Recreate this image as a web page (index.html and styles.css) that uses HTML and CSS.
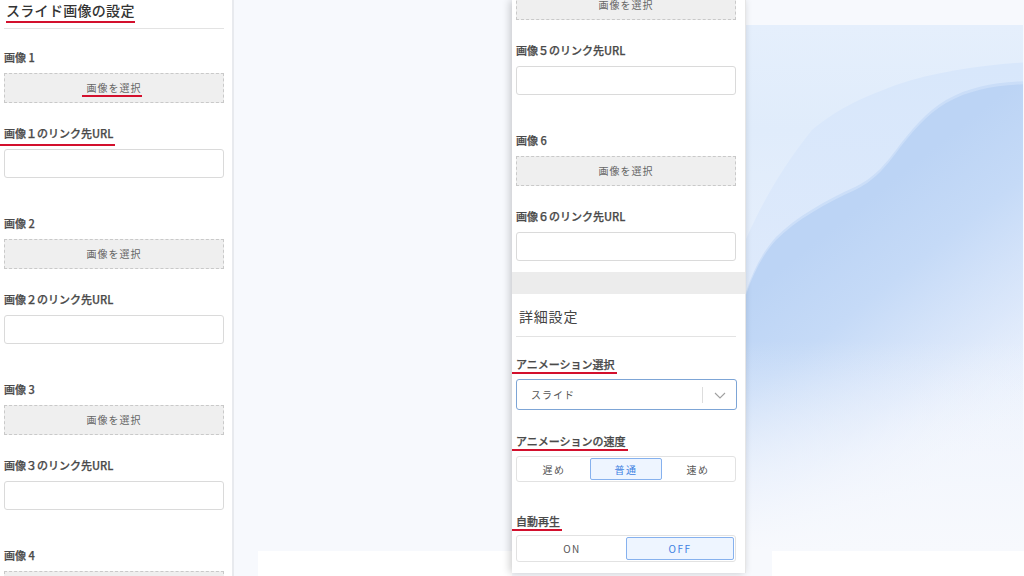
FILE: index.html
```html
<!DOCTYPE html>
<html lang="ja">
<head>
<meta charset="utf-8">
<title>スライド画像の設定</title>
<link rel="stylesheet" href="styles.css">
</head>
<body>
<div class="screen">
  <aside class="panel-left">
    <h2 class="panel-title"><span class="mark">スライド画像の設定</span></h2>
    <div class="field-group first">
      <div class="label">画像 1</div>
      <div class="picker"><span class="mark mark-pick">画像を選択</span></div>
      <div class="label url"><span class="mark mark-lead">画像１のリンク先URL</span></div>
      <div class="text-input"></div>
    </div>
    <div class="field-group">
      <div class="label">画像 2</div>
      <div class="picker">画像を選択</div>
      <div class="label url">画像２のリンク先URL</div>
      <div class="text-input"></div>
    </div>
    <div class="field-group">
      <div class="label">画像 3</div>
      <div class="picker">画像を選択</div>
      <div class="label url">画像３のリンク先URL</div>
      <div class="text-input"></div>
    </div>
    <div class="field-group">
      <div class="label">画像 4</div>
      <div class="picker">画像を選択</div>
    </div>
  </aside>

  <div class="backdrop">
    <div class="bottom-card"></div>
  </div>

  <section class="panel-center">
    <div class="field-group top-cut">
      <div class="picker">画像を選択</div>
      <div class="label url">画像５のリンク先URL</div>
      <div class="text-input"></div>
    </div>
    <div class="field-group">
      <div class="label">画像 6</div>
      <div class="picker">画像を選択</div>
      <div class="label url">画像６のリンク先URL</div>
      <div class="text-input"></div>
    </div>
    <div class="band"></div>
    <h3 class="section-title">詳細設定</h3>
    <div class="label anim"><span class="mark mark-lead">アニメーション選択</span></div>
    <div class="select">
      <span class="select-value">スライド</span>
      <span class="select-divider"></span>
      <svg class="chevron" width="12" height="7" viewBox="0 0 12 7"><path d="M1 1 L6 6 L11 1" fill="none" stroke="#a0a0a0" stroke-width="1.1"/></svg>
    </div>
    <div class="label speed"><span class="mark mark-lead">アニメーションの速度</span></div>
    <div class="segmented three">
      <span class="seg">遅め</span>
      <span class="seg active">普通</span>
      <span class="seg">速め</span>
    </div>
    <div class="label auto"><span class="mark mark-lead">自動再生</span></div>
    <div class="segmented two">
      <span class="seg">ON</span>
      <span class="seg active">OFF</span>
    </div>
  </section>

  <div class="preview">
    <svg class="hero" width="277" height="526" viewBox="0 0 277 526">
      <defs>
        <linearGradient id="base" x1="0" y1="0" x2="0" y2="1">
          <stop offset="0" stop-color="#e5effc"/>
          <stop offset="0.2" stop-color="#e0ecfb"/>
          <stop offset="0.55" stop-color="#e8f0fc"/>
          <stop offset="0.75" stop-color="#eff4fd"/>
          <stop offset="0.9" stop-color="#f4f7fd"/>
          <stop offset="1" stop-color="#f7f9fd"/>
        </linearGradient>
        <linearGradient id="outer" gradientUnits="userSpaceOnUse" x1="0" y1="40" x2="0" y2="430">
          <stop offset="0" stop-color="#d8e7fb"/>
          <stop offset="0.5" stop-color="#dbe8fb" stop-opacity="0.8"/>
          <stop offset="1" stop-color="#e8f0fc" stop-opacity="0"/>
        </linearGradient>
        <linearGradient id="inner" gradientUnits="userSpaceOnUse" x1="140" y1="160" x2="336" y2="407">
          <stop offset="0" stop-color="#bcd4f5"/>
          <stop offset="0.25" stop-color="#c5daf7"/>
          <stop offset="0.55" stop-color="#d9e6fa" stop-opacity="0.8"/>
          <stop offset="0.85" stop-color="#eef3fd" stop-opacity="0"/>
        </linearGradient>
        <linearGradient id="edge" gradientUnits="userSpaceOnUse" x1="140" y1="160" x2="240" y2="286">
          <stop offset="0" stop-color="#bcd4f5" stop-opacity="0.5"/>
          <stop offset="1" stop-color="#bcd4f5" stop-opacity="0"/>
        </linearGradient>
        <linearGradient id="fade" x1="0" y1="0" x2="0" y2="1">
          <stop offset="0.6" stop-color="#f4f7fd" stop-opacity="0"/>
          <stop offset="0.85" stop-color="#f4f7fd" stop-opacity="0.7"/>
          <stop offset="1" stop-color="#f7f9fd"/>
        </linearGradient>
      </defs>
      <rect width="277" height="526" fill="url(#base)"/>
      <path d="M-6,228 C10,190 30,150 66,105 C90,85 110,75 150,60 C190,46 240,40 283,37 L283,526 L-6,526 Z" fill="url(#outer)"/>
      <path d="M-6,287 C2,257 12,232 30,212 C50,192 80,175 109,162 C125,154 135,145 150,125 C165,105 180,87 200,75 C225,61 250,57 283,56 L283,526 L-6,526 Z" fill="url(#edge)"/>
      <path d="M-6,290 C2,260 12,235 30,215 C50,195 80,178 109,165 C125,157 135,148 150,128 C165,108 180,90 200,78 C225,64 250,60 283,59 L283,526 L-6,526 Z" fill="url(#inner)"/>
      <rect width="277" height="526" fill="url(#fade)"/>
    </svg>
    <div class="bottom-card right"></div>
  </div>
</div>
</body>
</html>
```

FILE: styles.css
```css
* { box-sizing: border-box; }
html, body { margin: 0; padding: 0; }
body {
  font-family: "Noto Sans CJK JP", "Noto Sans", sans-serif;
  background: #f7f9fd;
  color: #444;
}
.screen {
  display: flex;
  width: 1024px;
  height: 576px;
  overflow: hidden;
  background: #f7f9fd;
}

/* left panel */
.panel-left {
  width: 234px;
  flex: none;
  background: #fff;
  border-right: 2px solid #e8eaee;
  padding: 0 8px 0 4px;
  overflow: hidden;
}
.panel-title {
  margin: 0;
  padding: 0 0 8px 2px;
  font-size: 14px;
  line-height: 20px;
  font-weight: 500;
  letter-spacing: 0.3px;
  color: #333;
  border-bottom: 1px solid #e3e3e3;
}
.mark {
  border-bottom: 2px solid #d3102d;
  padding-bottom: 1px;
}
.mark-pick {
  margin-left: -5px;
  padding-left: 5px;
  padding-bottom: 0;
}
.mark-lead {
  margin-left: -4px;
  padding-left: 4px;
  padding-right: 2px;
  padding-bottom: 0;
}
.label.url .mark-lead { padding-bottom: 3px; }

.field-group { display: flex; flex-direction: column; margin-top: 37px; }
.field-group.first { margin-top: 20px; }
.field-group.top-cut { margin-top: -10px; }

.label {
  font-size: 11px;
  line-height: 16px;
  height: 16px;
  font-weight: 500;
  letter-spacing: 0;
  color: #4a4a4a;
  margin-bottom: 8px;
  -webkit-text-stroke: 0.25px #4a4a4a;
}
.label.url { margin-top: 22px; }

.picker {
  height: 30px;
  background: #efefef;
  border: 1px dashed #c9c9c9;
  text-align: center;
  font-size: 10px;
  line-height: 28px;
  letter-spacing: 1px;
  color: #666;
}
.text-input {
  height: 29px;
  background: #fff;
  border: 1px solid #dadada;
  border-radius: 3px;
}

/* middle backdrop */
.backdrop {
  flex: 1;
  display: flex;
  flex-direction: column;
  justify-content: flex-end;
}
.bottom-card {
  height: 25px;
  margin-left: 24px;
  background: #fff;
}

/* center panel */
.panel-center {
  width: 234px;
  flex: none;
  height: 573px;
  background: #fff;
  border-right: 1px solid #e6e6e6;
  box-shadow: -2px 0 8px rgba(0, 0, 0, 0.2);
  padding: 0 9px 11px 4px;
  display: flex;
  flex-direction: column;
  overflow: hidden;
  position: relative;
  z-index: 1;
}
.band {
  height: 22px;
  margin: 11px -9px 0 -4px;
  background: #ececec;
  flex: none;
}
.section-title {
  margin: 0;
  padding: 12px 0 10px 3px;
  font-size: 14px;
  line-height: 20px;
  font-weight: 400;
  letter-spacing: 0.8px;
  color: #444;
  border-bottom: 1px solid #e3e3e3;
}
.label.anim { margin-top: 19px; margin-bottom: 7px; }
.label.speed { margin-top: 23px; margin-bottom: 7px; }
.label.auto { margin-top: 31px; margin-bottom: 6px; }

.select {
  height: 31px;
  margin-right: -1px;
  border: 1px solid #7da5d6;
  border-radius: 3px;
  display: flex;
  align-items: center;
  padding-left: 14px;
  flex: none;
}
.select-value {
  flex: 1;
  font-size: 10px;
  letter-spacing: 1px;
  color: #555;
}
.select-divider {
  width: 1px;
  height: 16px;
  background: #dddddd;
}
.chevron { margin: 1px 10px 0 11px; }

.segmented {
  display: grid;
  border: 1px solid #e2e2e2;
  border-radius: 3px;
  padding: 1px;
  flex: none;
}
.segmented.three { grid-template-columns: 1fr 1fr 1fr; height: 26px; }
.segmented.two { grid-template-columns: 1fr 1fr; height: 27px; }
.seg {
  display: flex;
  align-items: center;
  justify-content: center;
  font-size: 10px;
  letter-spacing: 1.5px;
  color: #555;
  border: 1px solid transparent;
  border-radius: 2px;
}
.seg.active {
  background: #eef5ff;
  border-color: #86b1ee;
  color: #3f82e2;
}

/* preview */
.preview {
  flex: 1;
  display: flex;
  flex-direction: column;
  padding-top: 25px;
}
.hero { display: block; flex: none; }
.bottom-card.right { margin-left: 26px; }
```
